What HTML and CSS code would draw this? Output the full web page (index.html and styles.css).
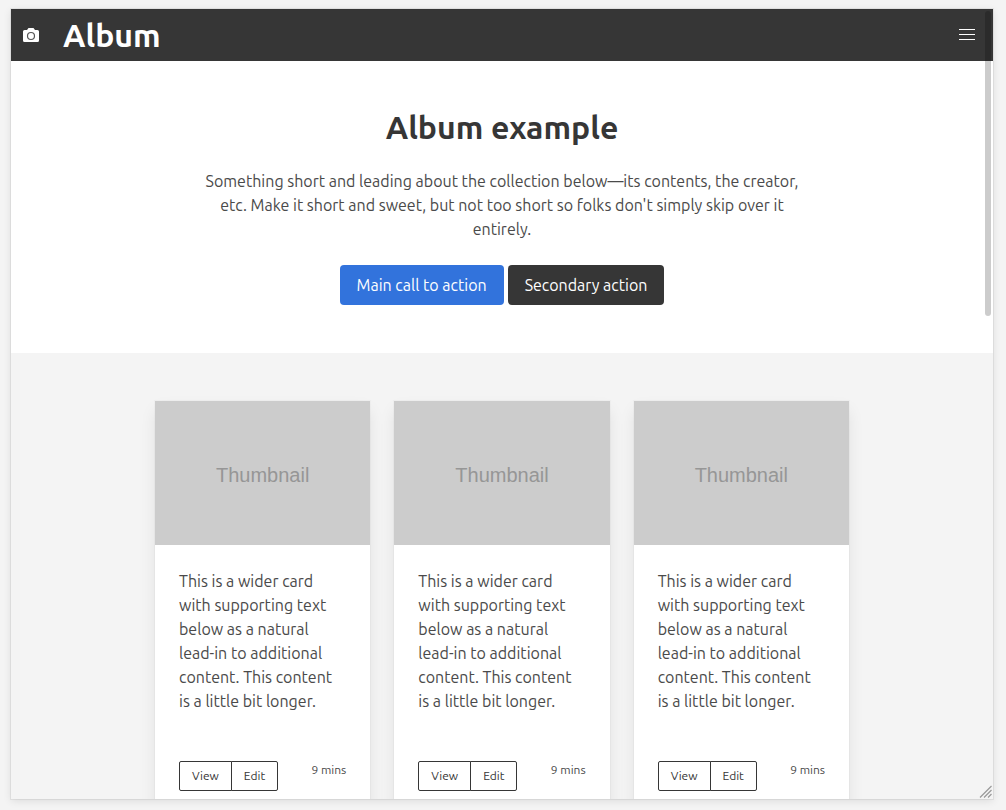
FILE: index.html
```html
<!DOCTYPE html>
<html lang="en">
<head>
<meta charset="utf-8">
<meta name="viewport" content="width=device-width, initial-scale=1">
<title>Album example</title>
<link rel="stylesheet" href="styles.css">
</head>
<body>
<div class="frame">
  <header class="navbar">
    <a class="brand" href="#">
      <svg class="brand-icon" viewBox="0 0 16 14" aria-hidden="true">
        <path fill="#fff" d="M5.500 0h5l1.500 2H14.500Q16 2 16 3.500V12.500Q16 14 14.500 14H1.500Q0 14 0 12.500V3.500Q0 2 1.500 2H4z"/>
        <circle cx="8" cy="8" r="3.500" fill="none" stroke="#555" stroke-width="1.200"/>
      </svg>
      <span class="brand-name">Album</span>
    </a>
    <button class="burger" type="button" aria-label="Menu"><span></span><span></span><span></span></button>
  </header>
  <main>
    <section class="hero">
      <h1 class="hero-title">Album example</h1>
      <p class="hero-text">Something short and leading about the collection below—its contents, the creator, etc. Make it short and sweet, but not too short so folks don't simply skip over it entirely.</p>
      <div class="hero-actions">
        <a class="button button-primary" href="#">Main call to action</a>
        <a class="button button-dark" href="#">Secondary action</a>
      </div>
    </section>
    <section class="album">
      <div class="cards">
        <article class="card">
          <div class="thumb">Thumbnail</div>
          <div class="card-body">
            <p class="card-text">This is a wider card with supporting text below as a natural lead-in to additional content. This content is a little bit longer.</p>
            <div class="card-foot">
              <div class="group"><button type="button">View</button><button type="button">Edit</button></div>
              <small class="time">9 mins</small>
            </div>
          </div>
        </article>
        <article class="card">
          <div class="thumb">Thumbnail</div>
          <div class="card-body">
            <p class="card-text">This is a wider card with supporting text below as a natural lead-in to additional content. This content is a little bit longer.</p>
            <div class="card-foot">
              <div class="group"><button type="button">View</button><button type="button">Edit</button></div>
              <small class="time">9 mins</small>
            </div>
          </div>
        </article>
        <article class="card">
          <div class="thumb">Thumbnail</div>
          <div class="card-body">
            <p class="card-text">This is a wider card with supporting text below as a natural lead-in to additional content. This content is a little bit longer.</p>
            <div class="card-foot">
              <div class="group"><button type="button">View</button><button type="button">Edit</button></div>
              <small class="time">9 mins</small>
            </div>
          </div>
        </article>
      </div>
    </section>
  </main>
  <div class="scroll-thumb"></div>
  <svg class="grip" viewBox="0 0 13 13" aria-hidden="true">
    <path d="M1 12.5L12.5 1M5 12.5L12.5 5M9 12.5L12.5 9" fill="none" stroke="#999" stroke-width="1.2"/>
  </svg>
</div>
</body>
</html>
```

FILE: styles.css
```css
* {
  box-sizing: border-box;
}

body {
  margin: 0;
  height: 100vh;
  padding: 9px 13px 11px 11px;
  overflow: hidden;
  background: #f4f4f4;
  color: #4a4a4a;
  font: 16px/24px Ubuntu, "Noto Sans", sans-serif;
}

.frame {
  position: relative;
  height: 100%;
  overflow: hidden;
  background: #f4f4f4;
  box-shadow: 0 2px 8px rgba(10, 10, 10, 0.1), 0 0 0 1px rgba(10, 10, 10, 0.06);
}

.navbar {
  display: flex;
  align-items: center;
  justify-content: space-between;
  height: 52px;
  padding: 0 18px 0 12px;
  background: #363636;
}

.brand {
  display: flex;
  align-items: center;
  gap: 24px;
  color: #fff;
  text-decoration: none;
}

.brand-icon {
  width: 16px;
  height: 14px;
}

.brand-name {
  font-size: 32px;
  line-height: 36px;
  font-weight: 700;
}

.burger {
  display: flex;
  flex-direction: column;
  gap: 4px;
  width: 16px;
  padding: 0 0 1px;
  border: 0;
  background: none;
}

.burger span {
  width: 16px;
  height: 1px;
  background: #fff;
}

.hero {
  display: flex;
  flex-direction: column;
  align-items: center;
  padding: 48px 24px;
  background: #fff;
  text-align: center;
}

.hero-title {
  margin: 0 0 24px;
  color: #363636;
  font-size: 32px;
  line-height: 36px;
  font-weight: 700;
}

.hero-text {
  max-width: 616px;
  margin: 0 0 24px;
}

.hero-actions {
  display: flex;
  gap: 4px;
}

.button {
  height: 40px;
  padding: 8px 17px;
  border-radius: 4px;
  color: #fff;
  text-decoration: none;
}

.button-primary {
  background: #3273dc;
}

.button-dark {
  background: #363636;
}

.album {
  padding: 48px 24px;
}

.cards {
  display: grid;
  grid-template-columns: repeat(3, 1fr);
  gap: 24px;
  max-width: 694px;
  margin: 0 auto;
}

.card {
  background: #fff;
  box-shadow: 0 8px 16px -2px rgba(10, 10, 10, 0.1), 0 0 0 1px rgba(10, 10, 10, 0.02);
}

.thumb {
  display: flex;
  align-items: center;
  justify-content: center;
  height: 144px;
  padding-top: 4px;
  background: #ccc;
  color: #969696;
  font-family: "Liberation Sans", Arial, sans-serif;
  font-size: 20px;
}

.card-body {
  padding: 24px;
}

.card-text {
  margin: 0 0 48px;
}

.card-foot {
  display: flex;
  justify-content: space-between;
  align-items: flex-start;
  font-size: 12px;
}

.group {
  display: flex;
}

.group button {
  height: 30px;
  padding: 0 12px;
  border: 1px solid #363636;
  border-radius: 2px 0 0 2px;
  background: #fff;
  color: #363636;
  font: inherit;
}

.group button + button {
  margin-left: -1px;
  border-radius: 0 2px 2px 0;
}

.time {
  font-size: 12px;
  line-height: 18px;
}

.scroll-thumb {
  position: absolute;
  top: 2px;
  right: 2px;
  width: 6px;
  height: 305px;
  border-radius: 3px;
  background: rgba(0, 0, 0, 0.2);
}

.grip {
  position: absolute;
  right: 1px;
  bottom: 1px;
  width: 13px;
  height: 13px;
}
```
